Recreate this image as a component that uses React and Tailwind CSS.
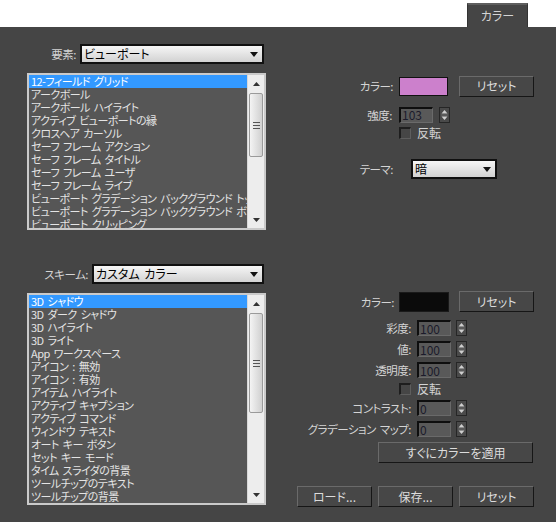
import React from "react";

const list1 = [
  "12-フィールド グリッド",
  "アークボール",
  "アークボール ハイライト",
  "アクティブ ビューポートの縁",
  "クロスヘア カーソル",
  "セーフ フレーム アクション",
  "セーフ フレーム タイトル",
  "セーフ フレーム ユーザ",
  "セーフ フレーム ライブ",
  "ビューポート グラデーション バックグラウンド トップ",
  "ビューポート グラデーション バックグラウンド ボトム",
  "ビューポート クリッピング",
];

const list2 = [
  "3D シャドウ",
  "3D ダーク シャドウ",
  "3D ハイライト",
  "3D ライト",
  "App ワークスペース",
  "アイコン : 無効",
  "アイコン : 有効",
  "アイテム ハイライト",
  "アクティブ キャプション",
  "アクティブ コマンド",
  "ウィンドウ テキスト",
  "オート キー ボタン",
  "セット キー モード",
  "タイム スライダの背景",
  "ツールチップのテキスト",
  "ツールチップの背景",
];

function Arrow() {
  return (
    <svg width="8" height="5" viewBox="0 0 8 5" className="shrink-0">
      <path d="M0 0H8L4 5Z" fill="#111" />
    </svg>
  );
}

function Dropdown({ value, className }) {
  return (
    <div
      className={
        "h-[20px] flex items-center justify-between border-2 border-[#101010] bg-gradient-to-b from-[#f6f6f6] to-[#d2d2d2] pl-[2px] pr-[4px] text-[#000] " +
        className
      }
    >
      <span className="whitespace-nowrap text-[12px] leading-[14px] [word-spacing:2px]">{value}</span>
      <Arrow />
    </div>
  );
}

function ScrollArrow({ up }) {
  return (
    <div className="h-[17px] w-full flex items-center justify-center shrink-0">
      <svg width="7" height="4" viewBox="0 0 7 4">
        {up ? <path d="M0 4H7L3.5 0Z" fill="#333" /> : <path d="M0 0H7L3.5 4Z" fill="#333" />}
      </svg>
    </div>
  );
}

function ListBox({ items, heightClass, thumbClass }) {
  return (
    <div className={"flex border-2 border-[#cacaca] bg-[#565656] " + heightClass}>
      <div className="flex-1 overflow-hidden">
        {items.map((t, i) => (
          <div
            key={i}
            className={
              "h-[13px] leading-[13px] pl-[2px] whitespace-nowrap tracking-[-0.55px] [word-spacing:2px] " +
              (i === 0 ? "bg-[#3399ff] text-white" : "text-[#e4e4e4]")
            }
          >
            {t}
          </div>
        ))}
      </div>
      <div className="w-[17px] bg-[#ededed] border-l border-l-[#d8d8d8] flex flex-col items-center">
        <ScrollArrow up />
        <div
          className={
            "mt-[1px] w-[14px] rounded-[2px] border border-[#9a9a9a] bg-gradient-to-r from-[#f4f4f4] to-[#d0d0d0] flex flex-col items-center justify-center gap-[2px] " +
            thumbClass
          }
        >
          <div className="w-[7px] h-[1px] bg-[#555]" />
          <div className="w-[7px] h-[1px] bg-[#555]" />
          <div className="w-[7px] h-[1px] bg-[#555]" />
        </div>
        <div className="flex-1" />
        <ScrollArrow />
      </div>
    </div>
  );
}

function Btn({ children, className }) {
  return (
    <div
      className={
        "h-[21px] flex items-center justify-center bg-[#474747] border border-t-[#6a6a6a] border-l-[#6a6a6a] border-r-[#161616] border-b-[#161616] text-[#dcdcdc] text-[12px] leading-[14px] " +
        className
      }
    >
      {children}
    </div>
  );
}

function Spinner() {
  return (
    <div className="w-[11px] h-[16px] border border-[#262626] bg-[#4a4a4a] flex items-center justify-center">
      <svg width="9" height="14" viewBox="0 0 9 14">
        <path d="M1.5 5.5H7.5L4.5 2Z" fill="#cfcfcf" />
        <path d="M1 7H8" stroke="#6a6a6a" strokeWidth="1" />
        <path d="M1.5 8.5H7.5L4.5 12Z" fill="#cfcfcf" />
      </svg>
    </div>
  );
}

function NumInput({ value }) {
  return (
    <div className="w-[34px] h-[16px] bg-[#595959] border-t-2 border-l-2 border-t-[#0e0e0e] border-l-[#0e0e0e] border-r border-b border-r-[#6a6a6a] border-b-[#6a6a6a] flex items-center pl-[1px] text-[#1b1b2b] text-[12px] leading-[12px]">
      {value}
    </div>
  );
}

function Check() {
  return (
    <div className="w-[12px] h-[12px] border-t-2 border-l-2 border-t-[#1e1e1e] border-l-[#1e1e1e] border-r border-b border-r-[#5e5e5e] border-b-[#5e5e5e] bg-[#464646]" />
  );
}

function Label({ children, className }) {
  return (
    <div className={"text-right whitespace-nowrap text-[#d4d4d4] text-[11.5px] leading-[14px] tracking-[-0.5px] [word-spacing:2px] " + className}>
      {children}
    </div>
  );
}

function NumRow({ label, value, className }) {
  return (
    <div className={"h-[16px] flex items-center " + className}>
      <Label className="w-[141px]">{label}</Label>
      <div className="ml-[6px]">
        <NumInput value={value} />
      </div>
      <div className="ml-[5px]">
        <Spinner />
      </div>
    </div>
  );
}

export default function App() {
  return (
    <div className="w-[556px] h-[522px] flex flex-col bg-white font-['Noto_Sans_CJK_JP',sans-serif] text-[11px] leading-[13px] [font-feature-settings:'palt']">
      <div className="h-[27px] flex justify-end items-end pr-[28px] shrink-0">
        <div className="w-[61px] h-[24px] bg-[#454545] border-t-2 border-t-[#5e5e5e] border-x border-x-[#333] flex items-center justify-center text-[#d4d4d4] text-[12px] leading-[14px]">
          カラー
        </div>
      </div>
      <div className="flex-1 bg-[#454545] flex">
        {/* left column */}
        <div className="w-[239px] ml-[27px] flex flex-col">
          <div className="mt-[17px] h-[20px] flex items-center justify-end pr-[2px]">
            <Label className="mr-[4px]">要素:</Label>
            <Dropdown value="ビューポート" className="w-[184px]" />
          </div>
          <div className="mt-[9px]">
            <ListBox items={list1} heightClass="h-[157px]" thumbClass="h-[64px]" />
          </div>
          <div className="mt-[34px] h-[20px] flex items-center justify-end pr-[2px]">
            <Label className="mr-[4px]">スキーム:</Label>
            <Dropdown value="カスタム カラー" className="w-[172px]" />
          </div>
          <div className="mt-[9px]">
            <ListBox items={list2} heightClass="h-[212px]" thumbClass="h-[100px]" />
          </div>
        </div>

        {/* right column */}
        <div className="flex-1 ml-[4px] flex flex-col">
          <div className="mt-[49px] h-[20px] flex items-center">
            <Label className="w-[123px]">カラー:</Label>
            <div className="ml-[6px] w-[49px] h-[19px] bg-[#cc80cc] border border-[#111]" />
            <Btn className="ml-[11px] w-[75px] h-[20px]">リセット</Btn>
          </div>
          <div className="mt-[10px] h-[17px] flex items-center">
            <Label className="w-[122px]">強度:</Label>
            <div className="ml-[7px]">
              <NumInput value="103" />
            </div>
            <div className="ml-[6px]">
              <Spinner />
            </div>
          </div>
          <div className="mt-[4px] h-[12px] flex items-center">
            <div className="ml-[129px]">
              <Check />
            </div>
            <div className="ml-[6px] text-[#d4d4d4] text-[12px] leading-[14px]">反転</div>
          </div>
          <div className="mt-[20px] h-[20px] flex items-center">
            <Label className="w-[123px]">テーマ:</Label>
            <Dropdown value="暗" className="ml-[18px] w-[86px]" />
          </div>

          <div className="mt-[112px] h-[21px] flex items-center">
            <Label className="w-[124px]">カラー:</Label>
            <div className="ml-[5px] w-[50px] h-[20px] bg-[#0b0b0b] border border-[#1a1a1a]" />
            <Btn className="ml-[10px] w-[75px]">リセット</Btn>
          </div>
          <NumRow label="彩度:" value="100" className="mt-[8px]" />
          <NumRow label="値:" value="100" className="mt-[5px]" />
          <NumRow label="透明度:" value="100" className="mt-[5px]" />
          <div className="mt-[5px] h-[12px] flex items-center">
            <div className="ml-[129px]">
              <Check />
            </div>
            <div className="ml-[6px] text-[#d4d4d4] text-[12px] leading-[14px]">反転</div>
          </div>
          <NumRow label="コントラスト:" value="0" className="mt-[5px]" />
          <NumRow label="グラデーション マップ:" value="0" className="mt-[5px]" />
          <div className="mt-[5px] flex">
            <Btn className="ml-[108px] w-[155px]">すぐにカラーを適用</Btn>
          </div>
          <div className="mt-[23px] flex gap-[6px] ml-[27px]">
            <Btn className="w-[75px]">ロード...</Btn>
            <Btn className="w-[75px]">保存...</Btn>
            <Btn className="w-[75px]">リセット</Btn>
          </div>
        </div>
      </div>
    </div>
  );
}
